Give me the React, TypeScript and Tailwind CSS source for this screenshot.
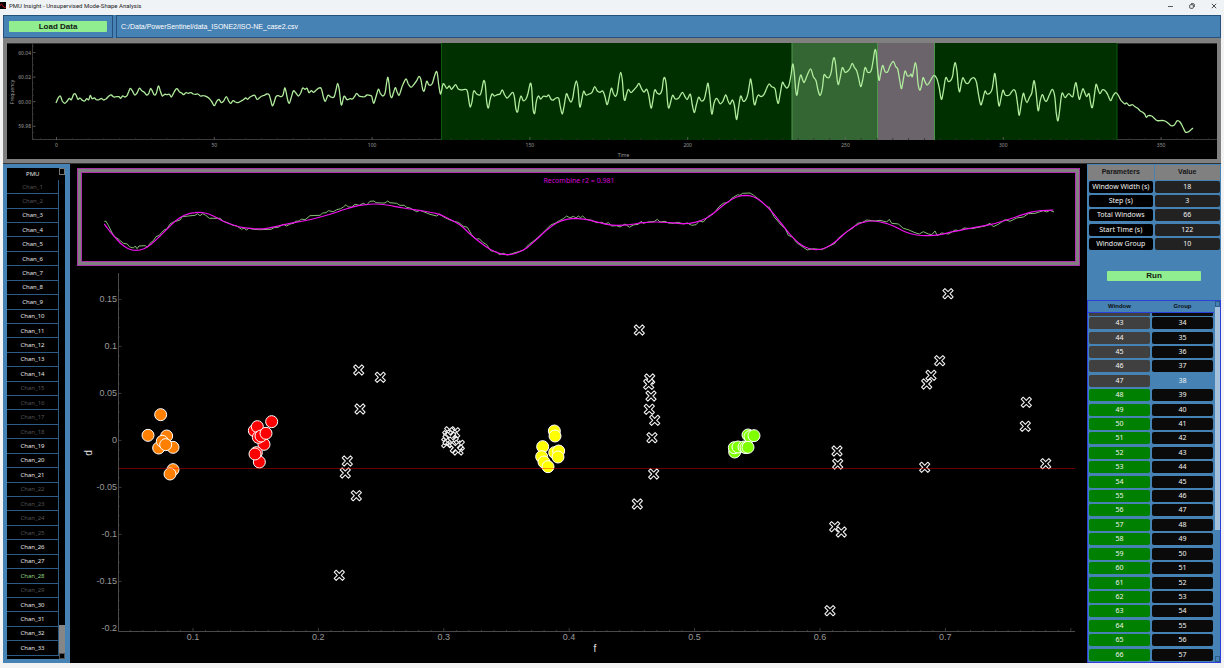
import React, { useState } from 'react';

type Point = [number, number];

const SANS = "'Noto Sans', 'Open Sans', sans-serif";
const ARIAL = "'Liberation Sans', Arial, sans-serif";

// Traces are flat x,y lists stored at 3x resolution and cut into segments.
const FREQ_A = [
  168, 309, 174, 295, 181, 288, 187, 303, 194, 310, 201, 304, 208, 295, 214, 299, 221, 283, 227, 283, 234, 298, 240, 294, 247, 301, 254, 303, 260, 296, 266, 299,
  271, 286, 276, 296, 283, 294, 289, 299, 297, 299, 304, 295, 311, 300, 319, 296, 327, 288, 334, 285, 341, 291, 349, 290, 357, 290, 362, 295, 368, 288, 375, 291,
  381, 287, 386, 275, 391, 265, 397, 272, 404, 285, 411, 279, 418, 265, 425, 272, 433, 277, 440, 285, 446, 281, 452, 265, 458, 276, 463, 285, 469, 280, 475, 258,
  481, 273, 487, 288, 494, 283, 501, 284, 508, 283, 514, 291, 520, 281, 526, 270, 531, 266, 538, 275, 545, 279, 551, 284, 558, 278, 565, 280, 573, 278, 580, 282,
  587, 283, 594, 282, 601, 288, 610, 287, 618, 289, 626, 294, 634, 303, 643, 317, 650, 304, 657, 298, 664, 308, 671, 303, 679, 290, 686, 303, 692, 310, 699, 302,
  706, 306, 714, 308, 722, 304, 730, 299, 737, 294, 743, 298, 749, 292, 756, 288, 764, 286, 771, 298, 778, 294, 786, 288, 793, 286, 800, 282, 807, 284, 812, 300,
  817, 317, 822, 308, 828, 290, 835, 287, 843, 290, 849, 285, 854, 264, 858, 275, 863, 300, 868, 310, 873, 295, 880, 273, 887, 278, 895, 288, 902, 279, 908, 264,
  915, 268, 921, 265, 927, 278, 934, 272, 941, 277, 949, 270, 957, 264, 964, 266, 970, 290, 976, 304, 984, 286, 992, 291, 1002, 291, 1008, 270, 1013, 250, 1018, 270,
  1024, 315, 1032, 289, 1041, 299, 1050, 296, 1057, 297, 1064, 289, 1070, 280, 1077, 288, 1085, 290, 1094, 290, 1101, 285, 1108, 286, 1115, 289, 1121, 310, 1128, 290,
  1135, 268, 1141, 280, 1148, 288, 1155, 280, 1159, 255, 1163, 232, 1167, 250, 1170, 280, 1175, 293, 1180, 280, 1186, 263, 1191, 275, 1197, 286,
];
const FREQ_B = [
  3, 180, 8, 165, 18, 147, 25, 162, 33, 172, 42, 163, 50, 152, 57, 139, 63, 150, 68, 178, 73, 182, 80, 154, 87, 165, 96, 162, 103, 140, 108, 126, 112, 130, 117, 170,
  122, 192, 128, 165, 132, 162, 140, 175, 148, 168, 154, 178, 160, 172, 167, 164, 175, 177, 185, 180, 195, 178, 202, 183, 207, 215, 211, 231, 216, 215, 221, 183,
  230, 192, 240, 195, 245, 180, 251, 152, 256, 165, 260, 215, 265, 234, 270, 210, 276, 192, 283, 198, 292, 194, 300, 192, 307, 180, 314, 195, 321, 204, 328, 198,
  338, 187, 343, 200, 348, 238, 353, 245, 358, 215, 363, 198, 370, 212, 378, 207, 384, 190, 391, 160, 395, 175, 399, 235, 404, 250, 409, 215, 415, 198, 422, 207,
  430, 199, 440, 200, 446, 195, 453, 208, 460, 210, 468, 204, 476, 205, 481, 230, 487, 252, 492, 230, 499, 192, 506, 205, 512, 216, 518, 205, 523, 175, 529, 153,
  534, 175, 538, 222, 541, 230, 546, 205, 551, 184, 558, 195, 567, 192, 576, 187, 584, 170, 592, 183, 600, 187, 608, 183, 615, 200, 621, 224, 627, 205, 634, 175,
  640, 190, 646, 199, 652, 187, 657, 150, 662, 127, 667, 150, 671, 200, 675, 211, 679, 195, 685, 178, 693, 188, 701, 180, 710, 170, 717, 160, 724, 175, 732, 186,
  740, 178, 746, 195, 753, 234, 758, 215, 764, 180, 772, 190, 780, 192, 786, 180, 790, 150, 794, 143, 799, 165, 803, 220, 807, 234, 812, 215, 818, 196, 826, 207,
  836, 204, 847, 187, 855, 200, 862, 208, 871, 193, 877, 225, 883, 248, 889, 225, 896, 202, 904, 213, 913, 207, 918, 185, 924, 160, 929, 195, 934, 245, 937, 250,
  942, 220, 950, 205, 960, 221, 968, 215, 977, 195, 984, 212, 990, 223, 997, 210, 1003, 225, 1008, 262, 1011, 266, 1016, 230, 1022, 198, 1030, 214, 1038, 208,
  1044, 190, 1049, 160, 1052, 147, 1057, 175, 1061, 215, 1065, 224, 1070, 205, 1075, 195, 1083, 200, 1092, 193, 1100, 175, 1107, 162, 1115, 170, 1125, 176,
  1130, 205, 1135, 220, 1140, 195, 1147, 158, 1153, 165, 1160, 174, 1167, 165, 1173, 135, 1178, 102, 1183, 130, 1187, 180, 1191, 195, 1196, 160, 1202, 135,
  1208, 150, 1213, 157, 1222, 135, 1232, 117, 1240, 140, 1248, 152, 1254, 180,
];
const FREQ_C = [
  60, 286, 67, 265, 72, 225, 80, 232, 88, 232, 94, 215, 98, 185, 103, 173, 107, 195, 111, 235, 115, 254, 120, 235, 127, 203, 135, 217, 143, 214, 150, 205, 157, 190,
  163, 202, 170, 212, 176, 235, 182, 260, 188, 240, 195, 203, 203, 217, 213, 213, 219, 185, 224, 152, 228, 155, 232, 200, 237, 241, 242, 220, 248, 196, 255, 215,
  263, 215, 270, 198, 280, 184, 287, 200, 293, 207, 299, 240, 304, 266, 309, 245, 315, 213, 322, 227, 329, 227, 333, 222, 337, 230, 342, 205, 346, 188, 350, 205,
  354, 250, 359, 270, 364, 260, 369, 233, 375, 245, 381, 255, 388, 248, 395, 235, 402, 226, 410, 235, 417, 260, 424, 298, 430, 275, 437, 233, 446, 245, 457, 232,
  461, 205, 466, 188, 471, 215, 475, 260, 479, 275, 484, 250, 489, 233, 497, 248, 505, 250, 513, 237, 521, 233, 529, 245, 535, 280, 542, 314, 548, 300, 555, 273,
  561, 282, 571, 278, 577, 265, 582, 230, 585, 221, 589, 250, 594, 300, 598, 318, 603, 295, 609, 271, 616, 285, 628, 285, 635, 275, 642, 269, 648, 280, 653, 315,
  658, 346, 664, 310, 670, 280, 675, 295, 681, 308, 688, 293, 695, 280, 699, 255, 703, 243, 708, 275, 713, 325, 716, 330, 720, 305, 727, 284, 734, 300, 740, 303,
  748, 285, 757, 268, 764, 288, 769, 340, 774, 362, 779, 330, 786, 280, 795, 293, 806, 281, 818, 290, 823, 265, 828, 248, 833, 275, 838, 298, 844, 280, 849, 266,
  855, 280, 860, 290, 867, 281, 872, 310, 877, 323, 882, 295, 886, 265, 889, 253, 895, 270, 900, 281, 908, 269, 918, 275, 925, 288, 932, 302, 939, 288, 947, 278,
  955, 286, 962, 300, 970, 308, 975, 312, 980, 309, 988, 317, 997, 314, 1005, 320, 1013, 325, 1020, 332, 1028, 337, 1034, 342, 1039, 352, 1045, 347, 1055, 348,
  1063, 355, 1072, 362, 1085, 361, 1095, 363, 1105, 370, 1113, 377, 1122, 376, 1132, 362, 1140, 366, 1148, 380, 1156, 396, 1164, 396, 1172, 390, 1179, 384,
];

const FIT_A = [
  103, 192, 118, 212, 135, 232, 155, 253, 175, 266, 198, 271, 222, 266, 245, 251, 270, 228, 295, 203, 320, 180, 345, 165, 375, 158, 405, 159, 430, 168, 460, 184,
  490, 195, 520, 203, 550, 206, 585, 206, 620, 199, 660, 190, 700, 183, 740, 174, 780, 163, 830, 146, 870, 136, 910, 132, 950, 135, 1000, 144, 1060, 153,
  1100, 161, 1130, 173, 1170, 195, 1200, 222, 1230, 247, 1260, 268, 1290, 281, 1315, 284, 1340, 279, 1370, 264, 1400, 238, 1430, 210, 1460, 189, 1490, 178, 1520, 175,
];
const FIT_B = [
  50, 179, 85, 187, 110, 193, 140, 196, 180, 194, 220, 188, 260, 186, 300, 188, 340, 191, 375, 187, 410, 174, 440, 152, 470, 128, 500, 111, 525, 106, 550, 110,
  575, 125, 605, 155, 635, 192, 660, 223, 690, 252, 715, 265, 738, 269, 765, 264, 795, 246, 825, 220, 855, 198, 880, 187, 910, 183, 940, 188, 970, 198,
  1005, 215, 1040, 225, 1075, 227, 1110, 224, 1150, 215, 1200, 205, 1260, 194, 1300, 183, 1340, 170, 1380, 157, 1410, 152, 1450, 150,
];
const MEASURED_A = [
  103, 184, 108, 184, 115, 196, 128, 222, 135, 231, 145, 237, 160, 250, 172, 252, 178, 260, 190, 264, 196, 258, 201, 266, 207, 258, 226, 257, 232, 262, 240, 250,
  250, 242, 258, 230, 268, 226, 275, 217, 285, 208, 290, 208, 300, 192, 308, 187, 330, 180, 337, 170, 355, 168, 375, 166, 383, 161, 390, 167, 398, 161, 407, 166,
  418, 175, 450, 175, 460, 184, 475, 189, 488, 196, 500, 198, 515, 208, 522, 204, 529, 210, 537, 205, 550, 208, 570, 209, 603, 208, 612, 203, 625, 202, 640, 193,
  650, 198, 660, 192, 672, 190, 676, 184, 688, 183, 694, 177, 705, 179, 720, 167, 750, 166, 758, 159, 768, 158, 775, 152, 790, 155, 800, 149, 812, 146, 820, 141,
  828, 134, 835, 141, 845, 141, 855, 133, 868, 136, 880, 130, 890, 135, 900, 124, 912, 123, 918, 128, 935, 129, 945, 129, 953, 123, 960, 128, 980, 130, 990, 136,
  1003, 136, 1010, 142, 1020, 144, 1040, 155, 1050, 151, 1065, 157, 1080, 163, 1100, 168, 1108, 162, 1125, 173, 1140, 180, 1155, 185, 1165, 187, 1180, 199,
  1192, 202, 1205, 224, 1218, 238, 1228, 236, 1238, 247, 1250, 254, 1262, 272, 1280, 276, 1288, 284, 1300, 280, 1312, 285, 1325, 281, 1345, 275, 1362, 270,
  1375, 255, 1395, 240, 1412, 225, 1425, 212, 1442, 195, 1455, 190, 1468, 182, 1480, 176, 1490, 168, 1500, 174, 1510, 169, 1518, 174, 1525, 168,
];
const MEASURED_B = [
  32, 173, 38, 168, 48, 178, 65, 181, 80, 188, 95, 187, 105, 192, 115, 188, 125, 198, 140, 197, 150, 201, 165, 192, 178, 202, 190, 195, 205, 193, 213, 184, 220, 190,
  238, 185, 252, 185, 262, 178, 270, 186, 285, 184, 295, 189, 310, 190, 325, 187, 340, 192, 352, 189, 365, 196, 378, 194, 388, 183, 400, 186, 415, 169, 432, 160,
  447, 140, 460, 130, 475, 127, 485, 115, 503, 104, 510, 106, 518, 100, 540, 99, 550, 105, 570, 121, 590, 140, 598, 142, 612, 170, 635, 197, 645, 205, 655, 226,
  668, 232, 680, 248, 700, 262, 712, 270, 730, 266, 755, 269, 770, 262, 795, 250, 805, 235, 830, 215, 850, 203, 862, 190, 878, 187, 890, 180, 915, 183, 930, 181,
  950, 186, 958, 178, 965, 190, 985, 192, 1000, 205, 1015, 209, 1035, 218, 1048, 222, 1060, 215, 1075, 222, 1085, 224, 1095, 213, 1102, 227, 1115, 219, 1135, 222,
  1155, 210, 1170, 212, 1182, 204, 1205, 206, 1245, 198, 1260, 190, 1270, 200, 1285, 193, 1305, 179, 1320, 184, 1340, 174, 1360, 171, 1375, 161, 1395, 160,
  1420, 152, 1430, 156, 1440, 151, 1452, 156,
];

const ORANGE = [84, 136, 122, 74, 140, 138, 116, 174, 127, 154, 159, 172, 137, 164, 159, 239, 150, 252];
const RED = [403, 122, 412, 110, 455, 95, 432, 163, 415, 142, 423, 138, 438, 130, 418, 216, 409, 188, 405, 192];
const YELLOW = [703, 393, 705, 408, 668, 440, 665, 470, 672, 486, 704, 458, 716, 453, 714, 471, 684, 500];
const LIME = [84, 465, 90, 470, 102, 467, 44, 516, 43, 503, 54, 501, 72, 501, 78, 503, 84, 502];
const CROSSES_LEFT = [
  958, 90, 116, 210, 181, 232, 120, 327, 82, 483, 76, 519, 109, 587, 58, 826, 989, 237, 986, 253, 993, 288, 988, 328, 1004, 361, 996, 413, 1001, 522, 952, 612,
  389, 395, 404, 398, 395, 405, 383, 407, 380, 428, 390, 420, 386, 414, 384, 419, 392, 412, 400, 426, 410, 438, 418, 436, 414, 450, 406, 443,
];
const CROSSES_RIGHT = [
  684, 41, 659, 242, 633, 286, 620, 312, 919, 367, 916, 439, 351, 513, 353, 552, 614, 562, 977, 551, 344, 740, 364, 756, 330, 992,
];

const unpack = (raw: number[], x0: number, y0: number): Point[] => {
  const points: Point[] = [];
  for (let i = 0; i < raw.length; i += 2) {
    points.push([x0 + raw[i] / 3, y0 + raw[i + 1] / 3]);
  }
  return points;
};

const linePath = (points: Point[]) =>
  points.map(([x, y], i) => `${i ? 'L' : 'M'}${x.toFixed(1)} ${y.toFixed(1)}`).join('');

// Catmull-Rom through every point
const curvePath = (points: Point[]) => {
  let d = `M${points[0][0].toFixed(1)} ${points[0][1].toFixed(1)}`;
  for (let i = 0; i < points.length - 1; i++) {
    const p0 = points[Math.max(i - 1, 0)];
    const p1 = points[i];
    const p2 = points[i + 1];
    const p3 = points[Math.min(i + 2, points.length - 1)];
    const c = [
      p1[0] + (p2[0] - p0[0]) / 6, p1[1] + (p2[1] - p0[1]) / 6,
      p2[0] - (p3[0] - p1[0]) / 6, p2[1] - (p3[1] - p1[1]) / 6,
      p2[0], p2[1],
    ];
    d += `C${c.map((v) => v.toFixed(1)).join(' ')}`;
  }
  return d;
};

const frequencyPath = curvePath([...unpack(FREQ_A, 0, 0), ...unpack(FREQ_B, 400, 30), ...unpack(FREQ_C, 800, 0)]);
const fitPath = curvePath([...unpack(FIT_A, 70, 160), ...unpack(FIT_B, 570, 160)]);
const measuredPath = linePath([...unpack(MEASURED_A, 70, 160), ...unpack(MEASURED_B, 570, 160)]);
const crosses = [...unpack(CROSSES_LEFT, 320, 300), ...unpack(CROSSES_RIGHT, 720, 280)];

const clusters = [
  { color: '#ff8000', points: unpack(ORANGE, 120, 390) },
  { color: '#ff0000', points: unpack(RED, 120, 390) },
  { color: '#ffff00', points: unpack(YELLOW, 320, 300) },
  { color: '#80ff00', points: unpack(LIME, 720, 280) },
];

const range = (count: number, start = 0) => Array.from({ length: count }, (_, i) => i + start);

const mutedChannels = [1, 2, 15, 16, 17, 18, 22, 23, 24, 25, 29];

const parameters = [
  { label: 'Window Width (s)', value: 18 },
  { label: 'Step (s)', value: 3 },
  { label: 'Total Windows', value: 66 },
  { label: 'Start Time (s)', value: 122 },
  { label: 'Window Group', value: 10 },
];

const windowRows = range(24, 43).map((n) => ({ window: n, group: n - 9 }));

function TitleBar() {
  return (
    <header className="flex h-[15px] items-center justify-between bg-[#f0f3f6] font-[Roboto,'Open_Sans',sans-serif]">
      <div className="flex items-center gap-[3px] pb-1">
        <svg className="h-[7px] w-[6px]" viewBox="0 0 6 7">
          <rect width="6" height="7" fill="#000" />
          <path d="M0 4C1 1 2 2 3 4S4 6 6 5" fill="none" stroke="#d01020" strokeWidth="1" />
        </svg>
        <h1 className="text-[6px] leading-[8px] text-[#222]">PMU Insight - Unsupervised Mode-Shape Analysis</h1>
      </div>
      <div className="flex items-center gap-[16px] pr-[7px] pb-1">
        <button aria-label="Minimize">
          <svg className="h-[6px] w-[6px]" viewBox="0 0 6 6" fill="none" stroke="#333">
            <path d="M1 3.5H6" strokeWidth="0.8" />
          </svg>
        </button>
        <button aria-label="Restore">
          <svg className="h-[6px] w-[6px]" viewBox="0 0 6 6" fill="none" stroke="#222" strokeWidth="0.8">
            <rect x="0.7" y="1.7" width="3.6" height="3.6" rx="0.8" />
            <path d="M2 .7H4.3Q5.3 .7 5.3 1.7V4" />
          </svg>
        </button>
        <button aria-label="Close">
          <svg className="h-[6px] w-[6px]" viewBox="0 0 6 6" fill="none" stroke="#222" strokeWidth="0.8">
            <path d="M.8 .8L5.2 5.2M5.2 .8L.8 5.2" />
          </svg>
        </button>
      </div>
    </header>
  );
}

function Toolbar() {
  return (
    <div className="flex h-[23px] gap-[3px] bg-[#4682b4] font-['Liberation_Sans',Arial,sans-serif]">
      <div className="flex w-[110px] items-center border border-[#24527c] px-[5px]">
        <button className="h-[11px] w-full rounded-[1px] bg-[#90ee90] text-[8px] leading-[11px] font-bold text-[#102010]">
          Load Data
        </button>
      </div>
      <div className="flex flex-1 items-center border border-[#24527c] px-1">
        <p className="text-[7px] leading-[9px] text-white">C:/Data/PowerSentinel/data_ISONE2/ISO-NE_case2.csv</p>
      </div>
    </div>
  );
}

function FrequencyChart() {
  return (
    <section className="border-4 border-t-5 border-[#808080] bg-black" aria-label="Frequency">
      <svg className="block h-auto w-full" viewBox="7 43 1210 116" fontFamily={SANS} fontSize="5" fill="#9a9a9a">
        <path d="M7 43.5H1217" stroke="#333" />
        <path d="M32.5 43V140M32 139.5H1217" stroke="#3a3a3a" fill="none" />
        <rect x="441" y="43" width="351" height="97" fill="#003000" />
        <rect x="792" y="43" width="85" height="97" fill="#346634" />
        <rect x="877" y="43" width="57" height="97" fill="#6b646b" />
        <rect x="934" y="43" width="183" height="97" fill="#003000" />
        <path d="M441.5 43V140M1117 43V140" stroke="#0c5c0c" />
        <path d="M792 43V140M877.5 43V140M934.5 43V140" stroke="#4c964c" />
        {range(75, -1).map((i) => (
          <path
            key={i}
            d={`M${(56.5 + i * 15.78).toFixed(1)} ${i % 10 ? 138 : 137}V140`}
            stroke={i % 10 ? '#303030' : '#666'}
            strokeWidth="0.8"
          />
        ))}
        {['60.04', '60.02', '60.00', '59.98'].map((label, i) => (
          <g key={label}>
            <text x="31" y={54.5 + i * 24.6} textAnchor="end">{label}</text>
            <path d={`M32.5 ${52.5 + i * 24.6}h3`} stroke="#555" />
          </g>
        ))}
        {range(16).map((i) => (
          <path key={i} d={`M32.5 ${46.4 + i * 6.15}h1.5`} stroke="#333" strokeWidth="0.8" />
        ))}
        {range(8).map((i) => (
          <text key={i} x={56.5 + i * 157.8} y="146.5" textAnchor="middle">{i * 50}</text>
        ))}
        <text x="623.5" y="157" textAnchor="middle">Time</text>
        <text transform="translate(13.5 92) rotate(-90)" textAnchor="middle">Frequency</text>
        <path d={frequencyPath} fill="none" stroke="#b0ec9c" strokeWidth="1.3" strokeLinejoin="round" />
      </svg>
    </section>
  );
}

function ChannelList() {
  const [selected, setSelected] = useState(28);
  return (
    <aside className="w-[67px] shrink-0 bg-[#4682b4] py-1 pr-[5px] pl-1">
      <div className="flex h-[491px] bg-black font-['Noto_Sans','Open_Sans',sans-serif]">
        <table className="h-[488px] flex-1 table-fixed border-collapse text-center text-[6px] leading-[8px] text-[#e4e4e4]">
          <thead>
            <tr className="h-[12px]">
              <th className="p-0 font-normal">PMU</th>
            </tr>
          </thead>
          <tbody>
            {range(33, 1).map((n) => (
              <tr
                key={n}
                onClick={() => setSelected(n)}
                className={
                  mutedChannels.includes(n)
                    ? 'text-[#525252]'
                    : n === selected
                      ? 'text-[#90d080]'
                      : 'text-[#e4e4e4]'
                }
              >
                <td className="border-r border-b border-[#2c5c86] p-0">Chan_{n}</td>
              </tr>
            ))}
          </tbody>
        </table>
        <div className="flex w-[6px] flex-col justify-between bg-black">
          <div className="h-[7px] border border-[#777]" />
          <div>
            <div className="h-[28px] bg-[#868686]" />
            <div className="h-[6px] border border-[#555]" />
          </div>
        </div>
      </div>
    </aside>
  );
}

function RecombinePanel() {
  return (
    <section className="mx-[7px] mt-1 border border-[#a832a8] bg-[#808080] p-[3px]" aria-label="Recombine">
      <div className="border border-[#b030b0] bg-black">
        <svg className="block h-auto w-full" viewBox="82 173 993 88" fontFamily={SANS} fontSize="7">
          <text x="579" y="183" textAnchor="middle" fill="#d800d8">Recombine r2 = 0.981</text>
          <path d={measuredPath} fill="none" stroke="#86bd76" strokeWidth="1" />
          <path d={fitPath} fill="none" stroke="#f010f0" strokeWidth="1.2" />
        </svg>
      </div>
    </section>
  );
}

function ModeScatter() {
  return (
    <svg className="block h-auto w-full" viewBox="70 266 1017 397" fontFamily={ARIAL} fontSize="9" fill="#9a9a9a">
      <path d="M118.5 273V631.5H1075" fill="none" stroke="#4a4a4a" />
      {range(36).map((i) => (
        <path key={i} d={`M118.5 ${290 + i * 9.4}h${i % 5 === 1 ? 3 : 1}`} stroke="#4a4a4a" strokeWidth="0.8" />
      ))}
      {range(76).map((i) => (
        <path key={i} d={`M${130.3 + i * 12.54} 631v${i % 10 === 5 ? -3 : -1}`} stroke="#4a4a4a" strokeWidth="0.8" />
      ))}
      {['0.15', '0.1', '0.05', '0', '-0.05', '-0.1', '-0.15', '-0.2'].map((label, i) => (
        <text key={label} x="117" y={302 + i * 47} textAnchor="end">{label}</text>
      ))}
      {range(7, 1).map((i) => (
        <text key={i} x={67.5 + i * 125.4} y="640" textAnchor="middle">{i / 10}</text>
      ))}
      <text x="595" y="652" fontSize="10" fill="#e0e0e0" textAnchor="middle">f</text>
      <text transform="translate(92 453) rotate(-90)" fontSize="10" fill="#e0e0e0" textAnchor="middle">d</text>
      {clusters.map(({ color, points }) => (
        <g key={color} fill={color} stroke="#fff">
          {points.map(([x, y], i) => (
            <circle key={i} cx={x} cy={y} r="6" />
          ))}
        </g>
      ))}
      <g fill="#000" stroke="#f2f2f2" strokeWidth="1.1" strokeLinejoin="round">
        {crosses.map(([x, y], i) => (
          <path
            key={i}
            transform={`translate(${x.toFixed(1)} ${y.toFixed(1)}) rotate(45)`}
            d="M-1.4-5.8H1.4V-1.4H5.8V1.4H1.4V5.8H-1.4V1.4H-5.8V-1.4H-1.4Z"
          />
        ))}
      </g>
      <path d="M119 468.5H1075" stroke="#ff0000" strokeOpacity="0.42" />
    </svg>
  );
}

function ParameterTable() {
  return (
    <table className="h-[87px] w-full table-fixed border-collapse text-center text-[7px] leading-[12px] text-[#f2f2f2]">
      <thead className="bg-[#808080] font-['Liberation_Sans',Arial,sans-serif] text-[#151515]">
        <tr className="h-[15px]">
          <th className="border border-b-0 border-[#4682b4] p-0 font-bold">Parameters</th>
          <th className="border border-b-0 border-[#4682b4] p-0 font-bold">Value</th>
        </tr>
      </thead>
      <tbody className="font-['Noto_Sans','Open_Sans',sans-serif]">
        {parameters.map(({ label, value }) => (
          <tr key={label}>
            <td className="px-px py-0">
              <div className="h-3 rounded-[2px] bg-black whitespace-nowrap">{label}</div>
            </td>
            <td className="px-px py-0">
              <div className="h-3 rounded-[2px] bg-[#222]">{value}</div>
            </td>
          </tr>
        ))}
      </tbody>
    </table>
  );
}

function WindowTable() {
  return (
    <div className="flex h-[363px] border border-[#2c3fd8] font-['Noto_Sans','Open_Sans',sans-serif]">
      <div className="flex flex-1 flex-col">
        <table className="h-[361px] w-full table-fixed border-collapse text-center text-[7px] leading-[12px] text-[#f2f2f2]">
          <thead className="font-['Liberation_Sans',Arial,sans-serif] text-[6px] leading-[10px] text-[#101010]">
            <tr className="h-[11px] border-b border-[#2c3fd8]">
              <th className="p-0 font-bold">Window</th>
              <th className="p-0 font-bold">Group</th>
            </tr>
          </thead>
          <tbody>
            {/* tail end of the row scrolled under the header */}
            <tr className="h-[4px]">
              <td className="px-px py-0"><div className="h-[3px] rounded-b-[1px] bg-[#404040]" /></td>
              <td className="px-px py-0"><div className="h-[3px] rounded-b-[1px] bg-[#0a0a0a]" /></td>
            </tr>
            {windowRows.map((row) => (
              <tr key={row.window}>
                <td className="px-px py-0">
                  <div className={`h-3 rounded-[2px] ${row.window < 48 ? 'bg-[#404040]' : 'bg-[#008000]'}`}>{row.window}</div>
                </td>
                <td className="px-px py-0">
                  <div className={`h-3 rounded-[2px] ${row.group === 38 ? 'bg-[#4682b4]' : 'bg-[#0a0a0a]'}`}>{row.group}</div>
                </td>
              </tr>
            ))}
          </tbody>
        </table>
      </div>
      <div className="ml-px flex w-[5px] flex-col bg-[#4682b4]">
        <div className="h-[6px] border border-[#2b5c88]" />
        <div className="flex-1 bg-[#a3c1da]" />
        <div className="h-[126px]" />
        <div className="h-[6px] border border-[#2b5c88]" />
      </div>
    </div>
  );
}

export default function App() {
  return (
    <div className="min-h-screen bg-[#f3f3f3]">
      <TitleBar />
      <div className="mr-[3px] ml-[3px]">
        <Toolbar />
        <FrequencyChart />
        <main className="flex items-stretch border-t border-[#333] bg-black">
          <ChannelList />
          <div className="min-w-0 flex-1">
            <RecombinePanel />
            <ModeScatter />
          </div>
          <aside className="flex w-[134px] shrink-0 flex-col bg-[#4682b4]">
            <ParameterTable />
            <div className="flex flex-1 items-center justify-center">
              <button className="h-[10px] w-[94px] rounded-[1px] bg-[#90ee90] font-['Liberation_Sans',Arial,sans-serif] text-[8px] leading-[10px] font-bold text-[#102010]">
                Run
              </button>
            </div>
            <WindowTable />
          </aside>
        </main>
      </div>
    </div>
  );
}
